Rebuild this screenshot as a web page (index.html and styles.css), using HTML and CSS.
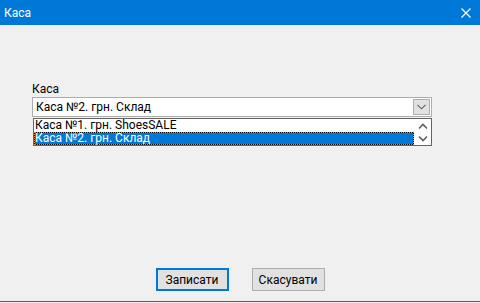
FILE: index.html
```html
<!DOCTYPE html>
<html lang="uk">
<head>
<meta charset="utf-8">
<link rel="stylesheet" href="styles.css">
</head>
<body>
<div class="window">
  <div class="titlebar">
    <span class="title">Каса</span>
    <svg class="close" width="10" height="10" viewBox="0 0 10 10"><path d="M0.5 0.5L9.5 9.5M9.5 0.5L0.5 9.5" stroke="#fff" stroke-width="1.2" fill="none"/></svg>
  </div>
  <div class="content">
    <div class="label">Каса</div>
    <div class="combo">
      <span class="combo-text">Каса №2. грн. Склад</span>
      <span class="combo-btn">
        <svg width="9" height="6" viewBox="0 0 9 6"><path d="M0.5 0.8L4.5 4.8L8.5 0.8" stroke="#606060" stroke-width="1.1" fill="none"/></svg>
      </span>
    </div>
    <div class="list">
      <div class="items">
        <div class="item">Каса №1. грн. ShoesSALE</div>
        <div class="item selected">Каса №2. грн. Склад</div>
      </div>
      <div class="scroll">
        <svg width="10" height="7" viewBox="0 0 10 7"><path d="M1 5.5L5 1.5L9 5.5" stroke="#606060" stroke-width="1.6" fill="none"/></svg>
        <svg width="10" height="7" viewBox="0 0 10 7"><path d="M1 1.5L5 5.5L9 1.5" stroke="#606060" stroke-width="1.6" fill="none"/></svg>
      </div>
    </div>
  </div>
  <div class="footer">
    <button class="btn primary">Записати</button>
    <button class="btn">Скасувати</button>
  </div>
  <div class="bottom-line"></div>
</div>
</body>
</html>
```

FILE: styles.css
```css
html, body {
  margin: 0;
  padding: 0;
  background: #f0f0f0;
}
.window {
  width: 480px;
  height: 303px;
  display: flex;
  flex-direction: column;
  font-family: Roboto, "Noto Sans", sans-serif;
  font-size: 12px;
  color: #000;
  overflow: hidden;
}
.titlebar {
  height: 25px;
  background: #0078d7;
  display: flex;
  align-items: center;
  justify-content: space-between;
  padding: 0 9px 0 4px;
  color: #fff;
  flex: none;
}
.title {
  font-size: 12px;
  line-height: 16px;
}
.content {
  flex: 1;
  padding: 56px 48px 0 32px;
}
.label {
  line-height: 16px;
  height: 16px;
}
.combo {
  height: 18px;
  border: 1px solid #adadad;
  background: #fff;
  display: flex;
  align-items: center;
  justify-content: space-between;
  padding: 0 1px 0 3px;
}
.combo-text {
  line-height: 16px;
}
.combo-btn {
  width: 15px;
  height: 14px;
  border: 1px solid #adadad;
  background: #e1e1e1;
  display: flex;
  align-items: center;
  justify-content: center;
}
.list {
  margin-top: 1px;
  margin-left: 1px;
  height: 26px;
  border: 1px solid #646464;
  background: #fff;
  display: flex;
}
.items {
  flex: 1;
  display: flex;
  flex-direction: column;
}
.item {
  height: 13px;
  line-height: 13px;
  padding-left: 1px;
  white-space: nowrap;
}
.item.selected {
  background: #0078d7;
  color: #fff;
  box-shadow: inset 0 0 0 1px #000;
  outline: 1px dotted #f08a24;
  outline-offset: -1px;
}
.scroll {
  width: 17px;
  display: flex;
  flex-direction: column;
  align-items: center;
  justify-content: space-around;
  padding: 1px 0;
}
.footer {
  flex: none;
  display: flex;
  justify-content: center;
  gap: 23px;
  padding-bottom: 10px;
}
.btn {
  width: 73px;
  height: 23px;
  margin: 0;
  padding: 0;
  font-family: Roboto, "Noto Sans", sans-serif;
  font-size: 12px;
  color: #000;
  background: #e1e1e1;
  border: 1px solid #adadad;
  box-sizing: border-box;
}
.btn.primary {
  border: 2px solid #0078d7;
}
.bottom-line {
  flex: none;
  height: 1px;
  background: #0078d7;
  margin-bottom: 1px;
}
```
